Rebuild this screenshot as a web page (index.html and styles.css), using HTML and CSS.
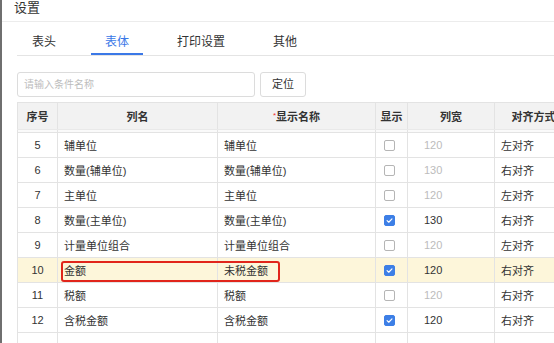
FILE: index.html
```html
<!DOCTYPE html>
<html lang="zh">
<head>
<meta charset="utf-8">
<link rel="stylesheet" href="styles.css">
</head>
<body>
<div class="dialog">
  <div class="title">设置</div>
  <div class="tabs">
    <div class="tab tab-first">表头</div>
    <div class="tab active">表体</div>
    <div class="tab">打印设置</div>
    <div class="tab">其他</div>
  </div>
  <div class="search">
    <div class="input">请输入条件名称</div>
    <div class="btn">定位</div>
  </div>
  <div class="table-wrap">
    <table class="grid">
      <colgroup>
        <col class="c-no"><col class="c-name"><col class="c-disp"><col class="c-show"><col class="c-width"><col class="c-align">
      </colgroup>
      <thead>
        <tr>
          <th>序号</th><th>列名</th><th><span class="req">*</span>显示名称</th><th>显示</th><th>列宽</th><th>对齐方式</th>
        </tr>
        <tr class="spacer"><td></td><td></td><td></td><td></td><td></td><td></td></tr>
      </thead>
      <tbody>
        <tr><td class="no">5</td><td>辅单位</td><td>辅单位</td><td class="chk"><span class="cb"></span></td><td class="w dim">120</td><td>左对齐</td></tr>
        <tr><td class="no">6</td><td>数量(辅单位)</td><td>数量(辅单位)</td><td class="chk"><span class="cb"></span></td><td class="w dim">130</td><td>右对齐</td></tr>
        <tr><td class="no">7</td><td>主单位</td><td>主单位</td><td class="chk"><span class="cb"></span></td><td class="w dim">120</td><td>左对齐</td></tr>
        <tr><td class="no">8</td><td>数量(主单位)</td><td>数量(主单位)</td><td class="chk"><span class="cb on"><svg viewBox="0 0 12 12"><path d="M2.8 6.2 L5 8.3 L9.3 3.8" fill="none" stroke="#fff" stroke-width="1.6" stroke-linecap="round" stroke-linejoin="round"/></svg></span></td><td class="w">130</td><td>右对齐</td></tr>
        <tr><td class="no">9</td><td>计量单位组合</td><td>计量单位组合</td><td class="chk"><span class="cb"></span></td><td class="w dim">120</td><td>左对齐</td></tr>
        <tr class="hl"><td class="no">10</td><td>金额</td><td>未税金额</td><td class="chk"><span class="cb on"><svg viewBox="0 0 12 12"><path d="M2.8 6.2 L5 8.3 L9.3 3.8" fill="none" stroke="#fff" stroke-width="1.6" stroke-linecap="round" stroke-linejoin="round"/></svg></span></td><td class="w">120</td><td>右对齐</td></tr>
        <tr><td class="no">11</td><td>税额</td><td>税额</td><td class="chk"><span class="cb"></span></td><td class="w dim">120</td><td>右对齐</td></tr>
        <tr><td class="no">12</td><td>含税金额</td><td>含税金额</td><td class="chk"><span class="cb on"><svg viewBox="0 0 12 12"><path d="M2.8 6.2 L5 8.3 L9.3 3.8" fill="none" stroke="#fff" stroke-width="1.6" stroke-linecap="round" stroke-linejoin="round"/></svg></span></td><td class="w">120</td><td>右对齐</td></tr>
        <tr><td class="no"></td><td></td><td></td><td></td><td></td><td></td></tr>
      </tbody>
    </table>
    <div class="mark"></div>
  </div>
</div>
</body>
</html>
```

FILE: styles.css
```css
html, body {
  margin: 0;
  padding: 0;
  background: #fff;
  overflow: hidden;
}
body {
  width: 554px;
  height: 343px;
  font-family: "Liberation Sans", "Noto Sans CJK SC", sans-serif;
  color: #333;
}
.dialog {
  height: 343px;
  border-left: 2px solid #6f6f6f;
  box-sizing: border-box;
  overflow: hidden;
}
.title {
  height: 22px;
  box-sizing: border-box;
  padding-left: 12px;
  font-size: 13px;
  line-height: 15px;
  border-bottom: 1px solid #ececec;
}
.tabs {
  display: flex;
  gap: 20px;
  margin: 9px 0 0 15px;
  border-bottom: 1px solid #e4e4e4;
}
.tab {
  height: 24px;
  box-sizing: border-box;
  padding: 0 14px;
  font-size: 12px;
  line-height: 22px;
  border-bottom: 2px solid transparent;
  color: #333;
}
.tab-first { padding: 0 15px; }
.tab.active {
  color: #3b78e7;
  border-bottom-color: #3b78e7;
}
.search {
  display: flex;
  gap: 5px;
  margin: 16px 0 0 15px;
}
.input {
  width: 238px;
  height: 25px;
  box-sizing: border-box;
  border: 1px solid #dcdcdc;
  border-radius: 3px;
  padding-left: 6px;
  font-size: 10px;
  line-height: 23px;
  color: #bdbdbd;
}
.btn {
  width: 46px;
  height: 25px;
  box-sizing: border-box;
  border: 1px solid #dcdcdc;
  border-radius: 3px;
  font-size: 11px;
  line-height: 23px;
  text-align: center;
  color: #333;
}
.table-wrap {
  position: relative;
  margin: 5px 0 0 15px;
}
.grid {
  border-collapse: collapse;
  table-layout: fixed;
  width: 555px;
  font-size: 11px;
}
.c-no { width: 40px; }
.c-name { width: 160px; }
.c-disp { width: 158px; }
.c-show { width: 32px; }
.c-width { width: 87px; }
.c-align { width: 78px; }
.grid th, .grid td {
  border: 1px solid #e3e3e3;
  padding: 0;
  white-space: nowrap;
  overflow: hidden;
}
.grid th {
  height: 26px;
  background: #f2f2f2;
  font-weight: bold;
  text-align: center;
  color: #333;
  border-bottom-color: #e9e9e9;
}
.req {
  color: #e33;
  font-size: 8px;
  vertical-align: 3px;
  font-weight: normal;
}
.grid tr.spacer td {
  height: 2px;
  background: #fafafa;
  border-top: none;
}
.grid tbody td {
  height: 24px;
  padding-left: 6px;
  color: #333;
}
.grid tbody td.no {
  text-align: center;
  padding-left: 0;
}
.grid tbody td.chk {
  padding-left: 8px;
}
.grid tbody td.w {
  padding-left: 16px;
}
.grid tbody td.dim {
  color: #bcbcbc;
}
.grid tr.hl td {
  background: #fdf6da;
}
.cb {
  display: block;
  width: 11px;
  height: 11px;
  box-sizing: border-box;
  border: 1px solid #b5b5b5;
  border-radius: 2px;
  background: #fff;
}
.cb.on {
  border-color: #3d7fe6;
  background: #3d7fe6;
}
.cb svg {
  display: block;
  width: 9px;
  height: 9px;
}
.mark {
  position: absolute;
  left: 44px;
  top: 159px;
  width: 219px;
  height: 21px;
  box-sizing: border-box;
  border: 2px solid #e1251b;
  border-radius: 3px;
}
```
